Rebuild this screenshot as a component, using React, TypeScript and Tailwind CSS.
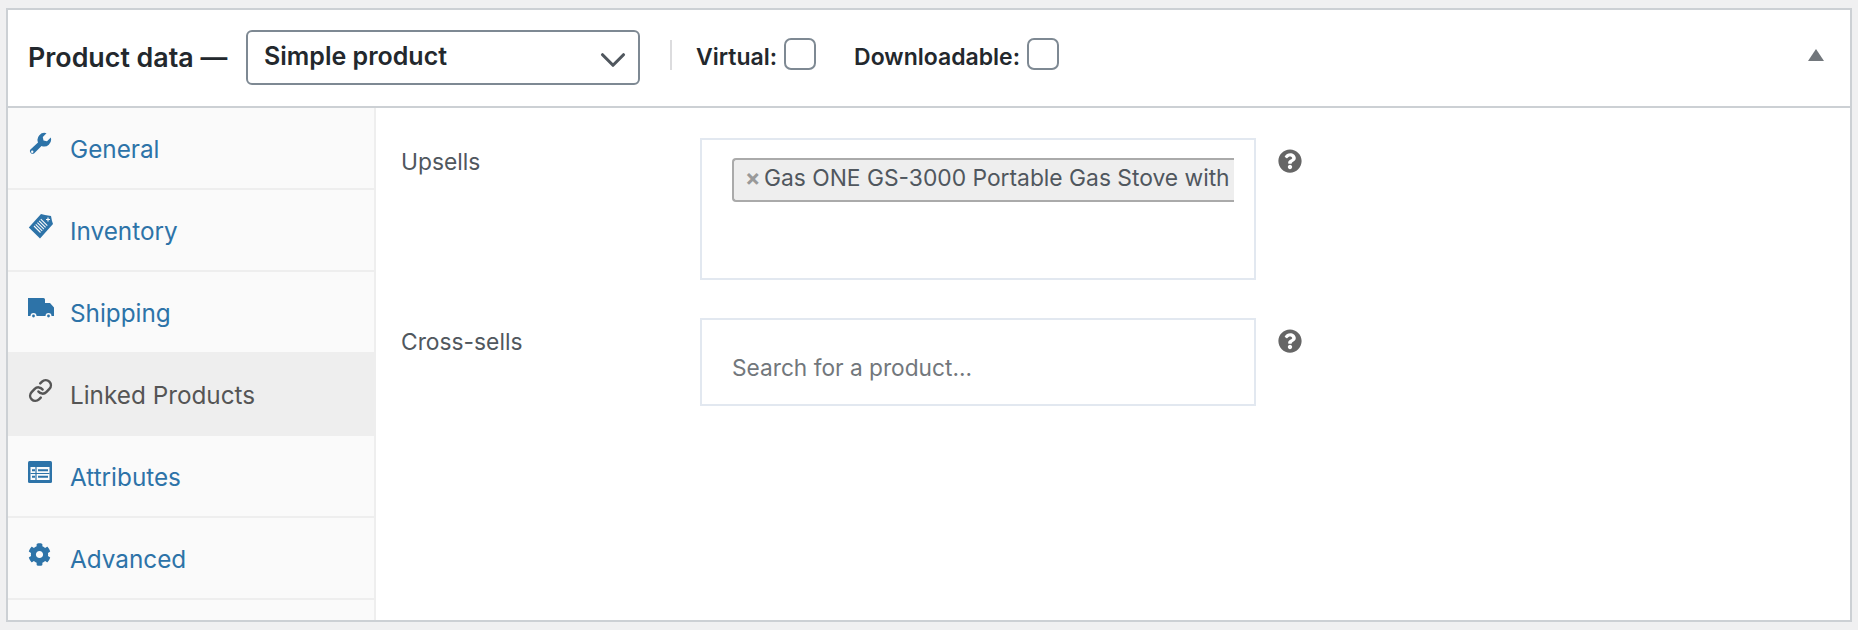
import { ChevronDown, Link } from "lucide-react";
import type { ReactNode } from "react";
import { FaCog, FaQuestionCircle } from "react-icons/fa";

function WrenchIcon() {
  return (
    <svg viewBox="0 0 24 24" className="w-6 h-6" fill="currentColor">
      <path d="M10 10.500A7 7 0 0 1 18.500 1.200L14.800 5l.7 3.500 3.500.7 3.800-3.700A7 7 0 0 1 13.500 14L6 21.500A2.800 2.800 0 0 1 2.200 17.800z" />
      <circle cx="4.200" cy="19.700" r="1.200" fill="#fafafa" />
    </svg>
  );
}

function TagIcon() {
  return (
    <svg viewBox="0 0 26 26" className="w-[26px] h-[26px]" fill="currentColor">
      <path d="M13 1l4 1 6 1 1 5 1 3L12 25.500 .8 14.500z" />
      <g stroke="#fafafa" strokeWidth="1.100">
        <path d="M6 13l6.500 6.500M7.700 11.300l6.500 6.500M9.400 9.600l6.500 6.500M11.100 7.900l6.500 6.500M12.800 6.200l6.500 6.500" />
      </g>
      <path d="M20 4.500v4M18 6.500h4" stroke="#fafafa" strokeWidth="1.200" />
    </svg>
  );
}

function TruckIcon() {
  return (
    <svg viewBox="0 0 26 21" className="w-[26px] h-[21px]" fill="currentColor">
      <path d="M0 0h15.500q1.500 0 1.500 1.500V5h5l4 4.500V18H0z" />
      <circle cx="5.500" cy="18" r="3" fill="#fafafa" />
      <circle cx="5.500" cy="18" r="1.400" />
      <circle cx="20.500" cy="18" r="3" fill="#fafafa" />
      <circle cx="20.500" cy="18" r="1.400" />
    </svg>
  );
}

function AttributesIcon() {
  return (
    <svg viewBox="0 0 24 22" className="w-6 h-[22px]">
      <rect width="24" height="22" rx="1.500" fill="currentColor" />
      <rect x="2.500" y="6" width="19" height="13" fill="#fafafa" />
      <path d="M8 6v13M2.500 12.500h19" stroke="currentColor" strokeWidth="1.200" />
      <path d="M10 9.300h10M10 15.700h10M4 9.300h3M4 15.700h3" stroke="currentColor" strokeWidth="2" />
    </svg>
  );
}

type Tab = { label: string; icon: ReactNode; active?: boolean };

const TABS: Tab[] = [
  { label: "General", icon: <WrenchIcon /> },
  { label: "Inventory", icon: <TagIcon /> },
  { label: "Shipping", icon: <TruckIcon /> },
  { label: "Linked Products", icon: <Link size={25} strokeWidth={2.400} />, active: true },
  { label: "Attributes", icon: <AttributesIcon /> },
  { label: "Advanced", icon: <FaCog size={23} /> },
];

function Checkbox() {
  return <span className="block w-8 h-8 -mt-[6px] rounded-[7px] border-2 border-[#7e8993] bg-white" />;
}

function Help() {
  return <FaQuestionCircle size={24} className="text-[#666666]" />;
}

export default function App() {
  return (
    <div
      className="h-[630px] bg-[#f0f0f1] pt-2 pb-2 px-[6px] text-[24.300px]"
      style={{ fontFamily: "Inter, 'Noto Sans', sans-serif" }}
    >
      <div className="h-[614px] flex flex-col border-2 border-[#ccd0d4] bg-white">
        {/* Header */}
        <div className="h-[98px] shrink-0 flex items-center border-b-2 border-[#ccd0d4] pl-5 pr-[26px] pb-[2px] font-semibold text-[#23282d] text-[23px]">
          <span className="w-[218px] shrink-0 text-[26.800px]">Product data —</span>
          <div className="w-[394px] h-[55px] shrink-0 flex items-center justify-between rounded-[6px] border-2 border-[#7e8993] pl-[16px] pr-1 text-[25px]">
            <span>Simple product</span>
            <ChevronDown size={42} strokeWidth={1.800} className="text-[#50575e] mt-[5px]" />
          </div>
          <div className="w-[2px] h-[30px] ml-[30px] -mt-1 bg-[#dcdcde]" />
          <div className="ml-[24px] flex items-center gap-[7px]">
            <span>Virtual:</span>
            <Checkbox />
          </div>
          <div className="ml-[38px] flex items-center gap-[7px]">
            <span>Downloadable:</span>
            <Checkbox />
          </div>
          <svg viewBox="0 0 16 12" className="w-4 h-3 ml-auto -mt-1 text-[#72777c]" fill="currentColor">
            <path d="M8 0l8 12H0z" />
          </svg>
        </div>

        {/* Body */}
        <div className="flex-1 flex min-h-0">
          <div className="w-[368px] shrink-0 bg-[#fafafa] border-r-2 border-[#eeeeee]">
            {TABS.map((tab) => (
              <div
                key={tab.label}
                className={`h-[82px] flex items-center border-b-2 border-[#eeeeee] ${
                  tab.active ? "bg-[#eeeeee] text-[#555555]" : "text-[#2d73a8]"
                }`}
              >
                <span className="w-[62px] pl-5 shrink-0 flex -mt-2">{tab.icon}</span>
                <span className="pt-[3px]">{tab.label}</span>
              </div>
            ))}
          </div>

          <div className="flex-1 pt-[30px] pl-[25px] text-[#50575e] text-[22.800px]">
            <div className="flex">
              <div className="w-[299px] pt-[10px] leading-[28px]">Upsells</div>
              <div className="w-[556px] h-[142px] border-2 border-[#e2e8f0] pl-[30px] pt-[18px] pr-5">
                <div className="h-[44px] flex items-center rounded-l-[4px] border-y-2 border-l-2 border-[#aaaaaa] bg-[#eeeeee] pl-[11px] pb-1 whitespace-nowrap">
                  <span className="w-[19px] shrink-0 text-[#999999] font-bold leading-none">×</span>
                  <span>Gas ONE GS-3000 Portable Gas Stove with</span>
                </div>
              </div>
              <div className="ml-[22px] pt-[11px]">
                <Help />
              </div>
            </div>
            <div className="flex mt-[38px]">
              <div className="w-[299px] pt-[10px] leading-[28px]">Cross-sells</div>
              <div className="w-[556px] h-[88px] flex items-center border-2 border-[#e2e8f0] pl-[30px] pt-[13px]">
                <span className="text-[#72777c] text-[22.700px]">Search for a product...</span>
              </div>
              <div className="ml-[22px] pt-[11px]">
                <Help />
              </div>
            </div>
          </div>
        </div>
      </div>
    </div>
  );
}
